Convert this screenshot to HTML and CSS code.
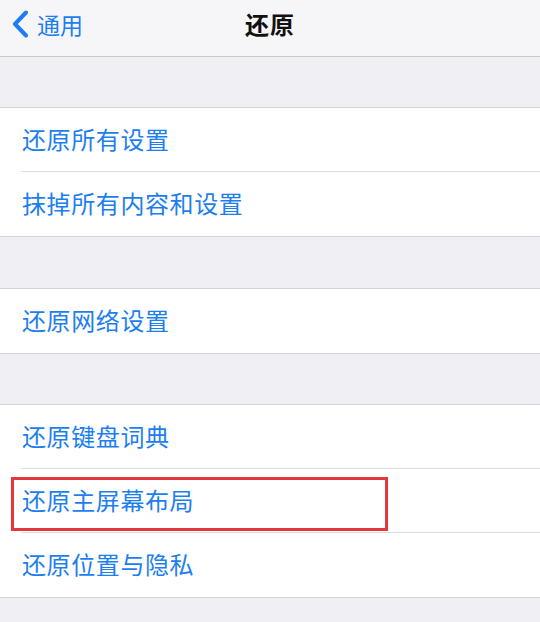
FILE: index.html
```html
<!DOCTYPE html>
<html lang="zh-CN">
<head>
  <meta charset="UTF-8">
  <meta name="viewport" content="width=device-width, initial-scale=1.0">
  <title>还原</title>
  <link rel="stylesheet" href="styles.css">
</head>
<body>
  <div class="navbar">
    <a class="back" href="#">
      <svg class="chevron" width="18" height="28" viewBox="0 0 18 28">
        <path d="M15 2.5 L4 14 L15 25.5" fill="none" stroke="#1c7ef0" stroke-width="4" stroke-linecap="round" stroke-linejoin="round"/>
      </svg>
      <span>通用</span>
    </a>
    <h1 class="title">还原</h1>
  </div>

  <div class="gap"></div>
  <ul class="group">
    <li class="item">还原所有设置</li>
    <li class="item">抹掉所有内容和设置</li>
  </ul>

  <div class="gap wide"></div>
  <ul class="group">
    <li class="item">还原网络设置</li>
  </ul>

  <div class="gap"></div>
  <ul class="group">
    <li class="item">还原键盘词典</li>
    <li class="item highlight">还原主屏幕布局</li>
    <li class="item">还原位置与隐私</li>
  </ul>
  <div class="gap"></div>
</body>
</html>
```

FILE: styles.css
```css
body {
  margin: 0;
  background-color: #efeff4;
  font-family: "Noto Sans CJK SC", "Noto Sans", sans-serif;
}
.navbar {
  position: relative;
  height: 56px;
  background: #f6f6f8;
  border-bottom: 1px solid #c8c8cc;
  display: flex;
  align-items: center;
  justify-content: center;
}
.back {
  position: absolute;
  left: 11px;
  top: 10px;
  display: flex;
  align-items: center;
  gap: 8px;
  color: #1c7ef0;
  text-decoration: none;
  font-size: 23px;
}
.back span {
  line-height: 28px;
}
.title {
  margin: 0;
  font-size: 24px;
  font-weight: 600;
  color: #111;
  letter-spacing: 1px;
  padding-bottom: 10px;
}
.gap {
  height: 50px;
}
.gap.wide {
  height: 51px;
}
.group {
  list-style: none;
  margin: 0;
  padding: 0;
  background: #fff;
  border-top: 1px solid #d4d4d8;
  border-bottom: 1px solid #d4d4d8;
}
.item {
  position: relative;
  height: 64px;
  line-height: 62px;
  font-size: 24px;
  letter-spacing: 0.6px;
  color: #1c7ef0;
  border-bottom: 1px solid #dcdce0;
  margin-left: 21px;
  padding-left: 1px;
  box-sizing: border-box;
}
.item:last-child {
  border-bottom: none;
}
.highlight::after {
  content: "";
  position: absolute;
  left: -10px;
  top: 8px;
  width: 371px;
  height: 48px;
  border: 3px solid #e0383c;
}
```
